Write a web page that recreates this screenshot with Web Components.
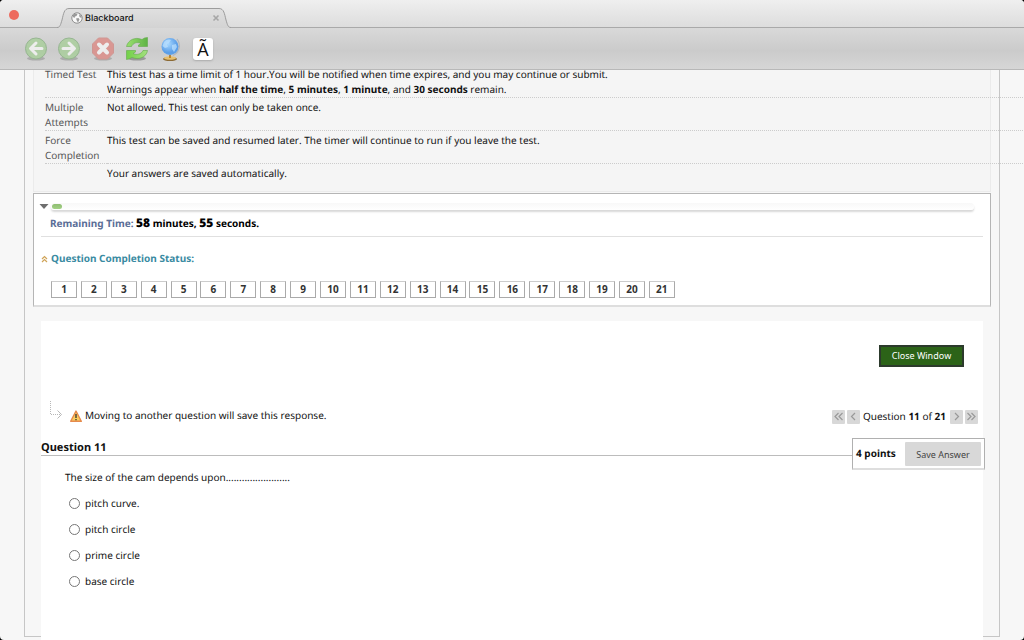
<!DOCTYPE html>
<html lang="en">
<head>
<meta charset="utf-8">
<title>Blackboard</title>
<style>
html, body { margin: 0; height: 100%; background: #000; }
body { font: 10px/15px "Noto Sans", "Open Sans", sans-serif; color: #111; text-rendering: geometricPrecision; font-kerning: none; }
</style>
</head>
<body>
<app-window>
  <title-bar slot="title">Blackboard</title-bar>
  <tool-bar slot="tools"></tool-bar>
  <test-page>
    <test-info></test-info>
    <test-status></test-status>
    <question-sheet></question-sheet>
  </test-page>
</app-window>

<script>
const define = (name, html, setup) => customElements.define(name, class extends HTMLElement {
  constructor() {
    super();
    const t = document.createElement('template');
    t.innerHTML = html;
    this.attachShadow({ mode: 'open' }).append(t.content.cloneNode(true));
    if (setup) setup(this.shadowRoot);
  }
});

define('app-window', `
<style>
:host { display: flex; flex-direction: column; height: 100vh; overflow: hidden; border-radius: 4px; background: #f7f7f7; }
header { flex: none; }
main { flex: 1; min-height: 0; overflow: hidden; }
</style>
<header><slot name="title"></slot><slot name="tools"></slot></header>
<main><slot></slot></main>`);

define('title-bar', `
<style>
:host { display: flex; align-items: flex-end; height: 28px; background: linear-gradient(#efefef, #dcdcdc); font: 9px/20px Inter, sans-serif; color: #111; }
.lights { flex: none; width: 57px; height: 28px; box-sizing: border-box; border-bottom: 1px solid #a9a9a9; padding: 10px 0 0 9px; }
.close { display: block; width: 10px; height: 10px; border: 0; padding: 0; border-radius: 50%; background: #ed6a5e; }
.tab { position: relative; flex: none; width: 174px; height: 20px; display: flex; align-items: center; box-sizing: border-box; padding: 0 11px 0 14px; }
.shape { position: absolute; left: 0; top: 0; }
.globe, .label, .x { position: relative; }
.label { flex: 1; padding: 1px 0 0 2px; font-weight: 500; }
.x { border: 0; background: none; padding: 0; width: 8px; height: 8px; display: flex; }
.rest { flex: 1; height: 27px; border-bottom: 1px solid #a9a9a9; }
</style>
<div class="lights"><button class="close" aria-label="Close"></button></div>
<div class="tab">
  <svg class="shape" width="174" height="20" viewBox="0 0 174 20"><defs><linearGradient id="g" x2="0" y2="1"><stop stop-color="#e0e0e0"/><stop offset="1" stop-color="#d3d3d3"/></linearGradient></defs>
  <path d="M0 20V19.500C3 19.500 3.500 17 5 12C6.500 6 7 .5 12 .5H162C167 .5 167.500 6 169 12C170.500 17 171 19.500 174 19.500V20Z" fill="url(#g)"/>
  <path d="M0 19.500C3 19.500 3.500 17 5 12C6.500 6 7 .5 12 .5H162C167 .5 167.500 6 169 12C170.500 17 171 19.500 174 19.500" fill="none" stroke="#9c9c9c"/></svg>
  <svg class="globe" width="12" height="12" viewBox="0 0 12 12"><circle cx="6" cy="6" r="5.200" fill="#f8f8f8" stroke="#777" stroke-width=".8"/><path d="M2 3L4 1.500 6.500 2 5.500 4 4 4.500 3.500 6 2 5ZM5 6.500L7.500 6 8.500 7.500 7 10.500 6 9ZM8 2L10.500 4V6L8.500 5Z" fill="#999"/></svg>
  <span class="label"><slot></slot></span>
  <button class="x" aria-label="Close tab"><svg width="8" height="8" viewBox="0 0 8 8"><path d="M1.500 1.500L6.500 6.500M6.500 1.500L1.500 6.500" stroke="#a6a6a6" stroke-width="1.600"/></svg></button>
</div>
<div class="rest"></div>`);

define('tool-bar', `
<style>
:host { display: flex; align-items: center; gap: 10px; height: 42px; box-sizing: border-box; padding: 0 23px; background: linear-gradient(#d9d9d9, #cbcbcb 55%, #d6d6d6); border-bottom: 1px solid #b8b8b8; }
button { width: 24px; height: 24px; border: 0; padding: 0; background: none; display: flex; font: 18px/22px "Open Sans", sans-serif; }
.dim { opacity: .65; }
.char { width: 20px; height: 22px; border-radius: 3px; background: #fff; box-shadow: 0 1px 2px #aaa; justify-content: center; color: #111; }
</style>
<button class="dim" aria-label="Back"><svg width="24" height="24" viewBox="0 0 24 24"><ellipse cx="13" cy="21.500" rx="9" ry="2" fill="#999"/><circle cx="13" cy="11.500" r="10.500" fill="#9fce8e" stroke="#78a870"/><path d="M19 11.500H8M13 6L7.500 11.500L13 17" fill="none" stroke="#fff" stroke-width="3" stroke-linecap="round" stroke-linejoin="round"/></svg></button>
<button class="dim" aria-label="Forward"><svg width="24" height="24" viewBox="0 0 24 24"><ellipse cx="12" cy="21.500" rx="9" ry="2" fill="#999"/><circle cx="12" cy="11.500" r="10.500" fill="#9fce8e" stroke="#78a870"/><path d="M6 11.500H17M12 6L17.500 11.500L12 17" fill="none" stroke="#fff" stroke-width="3" stroke-linecap="round" stroke-linejoin="round"/></svg></button>
<button class="dim" aria-label="Stop"><svg width="24" height="24" viewBox="0 0 24 24"><ellipse cx="12" cy="21.500" rx="9" ry="2" fill="#999"/><path d="M7.500 1H16.500L22.500 7V16L16.500 22H7.500L1.500 16V7Z" fill="#e07a74" stroke="#cf7a74"/><path d="M8 7.500L16 15.500M16 7.500L8 15.500" stroke="#fff" stroke-width="4" stroke-linecap="round"/></svg></button>
<button aria-label="Reload"><svg width="24" height="24" viewBox="0 0 24 24"><defs><linearGradient id="r" x2="1" y2="0"><stop stop-color="#9be070"/><stop offset="1" stop-color="#5fb345"/></linearGradient><linearGradient id="s" x2="1" y2="0"><stop stop-color="#72d048"/><stop offset="1" stop-color="#a4e080"/></linearGradient></defs><ellipse cx="12" cy="21.500" rx="9" ry="2" fill="#999"/><path d="M1.500 9.500C3 3 10-.5 17 2.500L19.500 1 22.500 .5V9.500H13.500V8L16 6.500C12 4.500 8 6 6.500 9.500Z" fill="url(#r)" stroke="#62aa4a" stroke-width=".6"/><path d="M22.500 13.500C21.500 20 14 23.500 7 20.500L4 22 1.500 22.500V13.500H10.500V15L8 16.500C12 18.500 16.500 17 18 13.500Z" fill="url(#s)" stroke="#62aa4a" stroke-width=".6"/></svg></button>
<button aria-label="Home"><svg width="24" height="24" viewBox="0 0 24 24"><defs><radialGradient id="b" cx=".4" cy=".35"><stop stop-color="#a8d8ff"/><stop offset="1" stop-color="#5c9fe8"/></radialGradient></defs><ellipse cx="11" cy="22" rx="7" ry="2" fill="#8c6a35"/><ellipse cx="11" cy="21" rx="6" ry="1.800" fill="#e8c06c"/><path d="M10 18H12V21H10Z" fill="#b98535"/><path d="M18 2C22 7 21 15 14 18.500" fill="none" stroke="#b0b6bd" stroke-width="1.200"/><circle cx="11" cy="9.500" r="8.500" fill="url(#b)"/><path d="M5 5C7 2 11 2 12 3L10 6 8 7 9 10 6 11 3.500 9ZM13 8L17 7 18 10 15 15 13 12Z" fill="#bfe2ff" opacity=".7"/></svg></button>
<button class="char" aria-label="Special characters">Ã</button>`);

define('test-page', `
<style>
:host { display: block; height: calc(100% + 2px); box-sizing: border-box; margin: 0 24px; border: 1px solid #c6c6c6; border-top: 0; padding: 0 8px; }
</style>
<slot></slot>`);

define('test-info', `
<style>
:host { display: block; background: #f5f5f5; border: 1px solid #ebebeb; border-top: 0; padding: 0 0 10px 11px; margin-top: -5px; }
table { width: 110%; border-collapse: separate; border-spacing: 0; }
th, td { padding: 2px 0 0; vertical-align: top; text-align: left; font-weight: 400; border-bottom: 1px dotted #ccc; }
th { width: 62px; color: #555; }
tr:last-child > * { border: 0; }
</style>
<table>
<tr><th scope="row">Timed Test</th><td>This test has a time limit of 1 hour.You will be notified when time expires, and you may continue or submit.<br>Warnings appear when <b>half the time</b>, <b>5 minutes</b>, <b>1 minute</b>, and <b>30 seconds</b> remain.</td></tr>
<tr><th scope="row">Multiple<br>Attempts</th><td>Not allowed. This test can only be taken once.</td></tr>
<tr><th scope="row">Force<br>Completion</th><td>This test can be saved and resumed later. The timer will continue to run if you leave the test.</td></tr>
<tr><th></th><td>Your answers are saved automatically.</td></tr>
</table>`);

define('test-status', `
<style>
:host { display: block; box-sizing: border-box; margin-top: 1px; height: 114px; border: 1px solid #b5b5b5; border-bottom: 2px solid #dedede; background: #fff; padding: 8px 7px 0; }
.timer { display: flex; align-items: center; gap: 2px; margin-left: -2px; height: 8px; }
.toggle { width: 10px; height: 8px; border: 0; padding: 0; background: none; display: flex; }
.track { flex: 1; height: 7px; margin-right: 9px; box-sizing: border-box; padding: 1px; border-radius: 4px; background: linear-gradient(#f8f8f8, #fff); box-shadow: 0 2px 2px #d8d8d8; }
.fill { width: 10px; height: 5px; border-radius: 3px; background: linear-gradient(#8fbd72, #a2d184); }
.left { margin: 0; padding: 5px 0 5px 9px; height: 16px; line-height: 16px; border-bottom: 1px solid #e0e0e0; font-weight: 700; color: #000; }
.left span { color: #5b6e97; }
.left b { font-size: 12px; }
h2 { margin: 14px 0 0; font-size: 10px; line-height: 15px; color: #3a8ba2; display: flex; align-items: center; gap: 3px; }
ol { list-style: none; margin: 15px 0 0 10px; padding: 0; max-width: 624px; display: flex; justify-content: space-between; }
li button { display: block; width: 26px; height: 17px; padding: 0; font: inherit; font-weight: 700; line-height: 15px; color: #333; background: #fff; border: 1px solid #aaa; border-top-color: #ccc; }
</style>
<div class="timer"><button class="toggle" aria-label="Collapse timer"><svg width="10" height="8" viewBox="0 0 10 8"><path d="M.5 2H9.500L5 7Z" fill="#6e6e6e"/></svg></button><div class="track"><div class="fill"></div></div></div>
<p class="left"><span>Remaining Time:</span> <b>58</b> minutes, <b>55</b> seconds.</p>
<h2><svg width="7" height="8" viewBox="0 0 7 8"><path d="M1 4L3.500 1.500 6 4M1 7L3.500 4.500 6 7" fill="none" stroke="#d0a458" stroke-width="1.200"/></svg>Question Completion Status:</h2>
<ol></ol>`, root => {
  const list = root.querySelector('ol');
  for (let n = 1; n <= 21; n++) {
    const li = document.createElement('li');
    li.innerHTML = `<button>${n}</button>`;
    list.append(li);
  }
});

define('question-sheet', `
<style>
:host { display: block; position: relative; background: #fff; margin: 14px 8px 0; padding-top: 24px; min-height: 100vh; box-sizing: border-box; }
button { font: inherit; }
.close { display: block; margin: 0 19px 0 auto; width: 85px; height: 22px; padding: 0; font-size: 9px; line-height: 18px; color: #fff; background: #2c6318; border: 2px solid #2c3a2c; }
.nav { display: flex; align-items: center; margin-top: 34px; height: 28px; padding: 0 5px 0 8px; }
.arrow { flex: none; align-self: flex-start; }
.warn { flex: none; margin: 2px 3px 0 7px; }
.note { flex: 1; }
.pages { display: flex; align-items: center; gap: 2px; margin-top: 3px; }
.pages button { width: 13px; height: 14px; padding: 0; border: 0; border-radius: 1px; background: #d8d8d8; display: flex; align-items: center; justify-content: center; }
.pages span { padding: 0 2px 0 1px; }
.pages svg { fill: none; stroke: #999; stroke-width: 1.200; }
.head { display: flex; align-items: flex-start; margin: 9px -2px 0 0; }
h1 { flex: 1; margin: 0; padding-top: 3px; font-size: 11px; line-height: 14px; border-bottom: 1px solid #bcbcbc; }
.points { display: flex; align-items: center; box-sizing: border-box; width: 133px; height: 32px; padding: 0 3px; justify-content: space-between; border: 1px solid #b0b0b0; border-bottom: 2px solid #dedede; background: #fff; font-weight: 700; }
.points button { width: 76px; height: 24px; border: 0; padding: 1px 0 0; border-radius: 1px; background: #d8d8d8; color: #444; font-size: 9px; font-weight: 400; }
fieldset { border: 0; margin: 0; padding: 0 0 0 24px; }
legend { padding: 0; }
label { display: flex; align-items: center; height: 26px; gap: 5px; padding-left: 4px; }
input { appearance: none; width: 11px; height: 11px; margin: 0; border: 1px solid #767676; border-radius: 50%; background: #fff; }
input:checked { box-shadow: inset 0 0 0 2px #fff; background: #2c6318; }
.answers { padding-top: 5px; }
</style>
<button class="close">Close Window</button>
<div class="nav">
  <svg class="arrow" width="14" height="20" viewBox="0 0 14 20"><path d="M1.500 0V14M2 13.500H12" fill="none" stroke="#b8b8b8" stroke-dasharray="1 1"/><path d="M8.500 9.500L12.500 13.500L8.500 17.500" fill="none" stroke="#b8b8b8"/></svg>
  <svg class="warn" width="12" height="12" viewBox="0 0 12 12"><path d="M6 1L11.300 11.300H.7Z" fill="#f9cc5c" stroke="#e68a4c" stroke-linejoin="round" stroke-width="1.400"/><path d="M6 4V8M6 9V10.300" stroke="#333" stroke-width="1.300"/></svg>
  <span class="note">Moving to another question will save this response.</span>
  <div class="pages">
    <button aria-label="First question"><svg width="11" height="9" viewBox="0 0 11 9"><path d="M5.500 1L2 4.500L5.500 8M9.500 1L6 4.500L9.500 8"/></svg></button>
    <button aria-label="Previous question"><svg width="7" height="9" viewBox="0 0 7 9"><path d="M5 1L1.500 4.500L5 8"/></svg></button>
    <span>Question <b>11</b> of <b>21</b></span>
    <button aria-label="Next question"><svg width="7" height="9" viewBox="0 0 7 9"><path d="M2 1L5.500 4.500L2 8"/></svg></button>
    <button aria-label="Last question"><svg width="11" height="9" viewBox="0 0 11 9"><path d="M1.500 1L5 4.500L1.500 8M5.500 1L9 4.500L5.500 8"/></svg></button>
  </div>
</div>
<div class="head"><h1>Question 11</h1><div class="points">4 points<button>Save Answer</button></div></div>
<fieldset>
  <legend>The size of the cam depends upon........................</legend>
  <div class="answers">
  <label><input type="radio" name="answer">pitch curve.</label>
  <label><input type="radio" name="answer">pitch circle</label>
  <label><input type="radio" name="answer">prime circle</label>
  <label><input type="radio" name="answer">base circle</label>
  </div>
</fieldset>`);
</script>
</body>
</html>
